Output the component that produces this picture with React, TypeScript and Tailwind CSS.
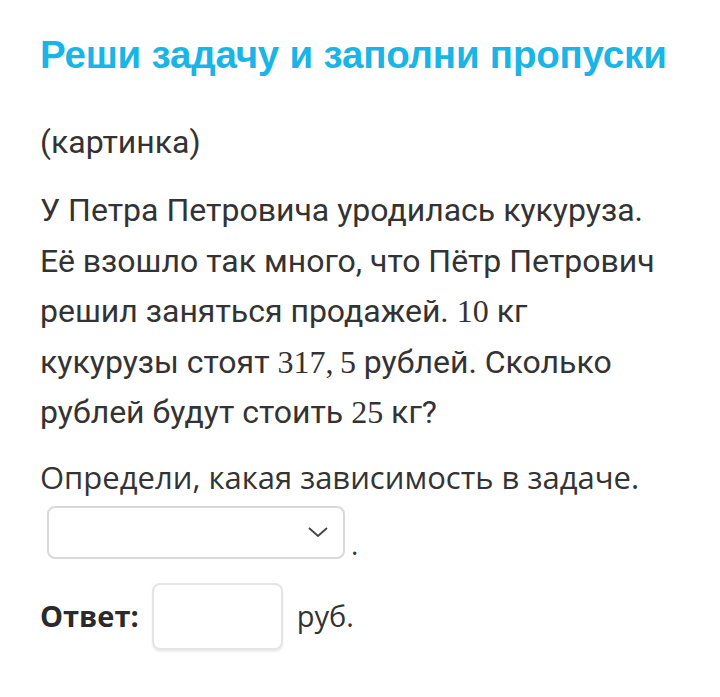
import React from "react";

const M = ({ children }: { children: React.ReactNode }) => (
  <span className="font-['Liberation_Serif',serif] text-[32px] leading-none">{children}</span>
);

export default function App() {
  return (
    <div className="w-[720px] h-[697px] bg-white text-[#333333] font-['Roboto',sans-serif] px-[40px] pt-[30px]">
      <h1 className="font-['Liberation_Sans',sans-serif] font-bold text-[38.5px] leading-[50px] text-[#1ab5e6] tracking-[-0.2px] whitespace-nowrap">
        Реши задачу и заполни пропуски
      </h1>
      <p className="mt-[42px] text-[32px] leading-[40px]">(картинка)</p>
      <p className="mt-[23px] text-[32px] leading-[50.5px] pr-[20px]">
        У Петра Петровича уродилась кукуруза. Её взошло так много, что Пётр Петрович решил заняться продажей.{" "}
        <M>10</M> кг кукурузы стоят <M>317,&thinsp;5</M> рублей. Сколько рублей будут стоить <M>25</M> кг?
      </p>
      <p className="mt-[19px] text-[31px] leading-[40px] font-['Open_Sans',sans-serif] whitespace-nowrap">
        Определи, какая зависимость в задаче.
      </p>
      <div className="flex items-end mt-[9px] ml-[7px]">
        <div className="w-[298px] h-[53px] border-2 border-[#d9d9d9] rounded-[8px] flex items-center justify-end pr-[14px]">
          <svg width="22" height="14" viewBox="0 0 22 14" fill="none">
            <path d="M2 3 L11 11 L20 3" stroke="#444" strokeWidth="1.8" />
          </svg>
        </div>
        <span className="ml-[6px] text-[28px] leading-[30px] font-['Open_Sans',sans-serif]">.</span>
      </div>
      <div className="flex items-center mt-[24px]">
        <span className="font-['Open_Sans',sans-serif] font-bold text-[29px] text-[#2a2a2a]">Ответ:</span>
        <div className="ml-[13px] w-[131px] h-[67px] border-2 border-[#e4e4e4] rounded-[8px] shadow-[0_2px_2px_rgba(0,0,0,0.08)]" />
        <span className="ml-[14px] font-['Open_Sans',sans-serif] text-[29px]">руб.</span>
      </div>
    </div>
  );
}
